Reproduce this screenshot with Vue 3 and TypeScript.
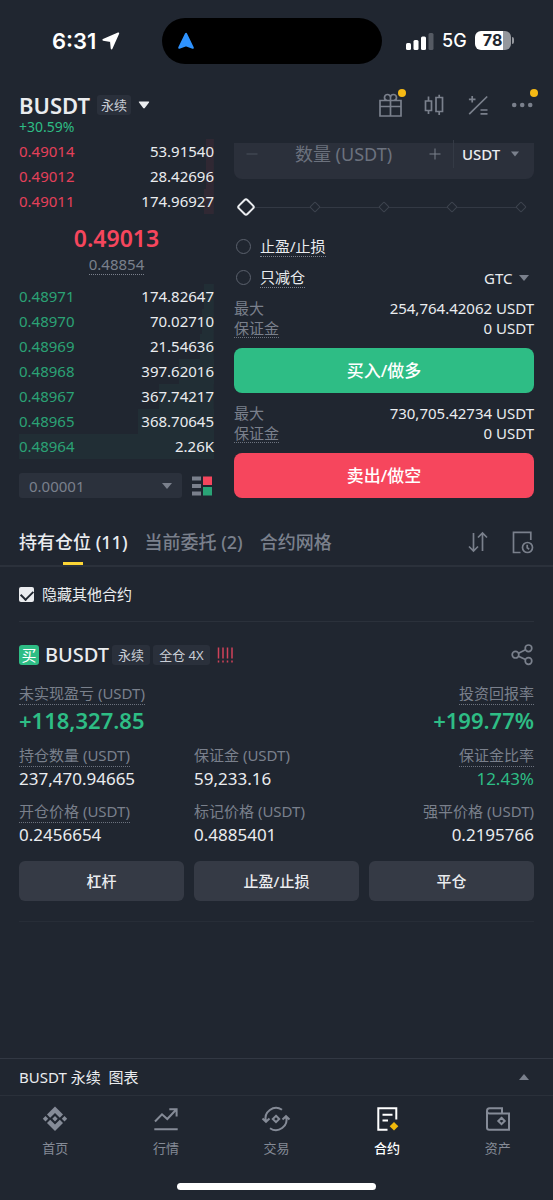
<script setup lang="ts">
import { ref } from 'vue'

interface BookRow {
  price: string
  amount: string
  depth: number
}

const asks: BookRow[] = [
  { price: '0.49014', amount: '53.91540', depth: 4 },
  { price: '0.49012', amount: '28.42696', depth: 4 },
  { price: '0.49011', amount: '174.96927', depth: 5 },
]

const bids: BookRow[] = [
  { price: '0.48971', amount: '174.82647', depth: 5 },
  { price: '0.48970', amount: '70.02710', depth: 6 },
  { price: '0.48969', amount: '21.54636', depth: 7 },
  { price: '0.48968', amount: '397.62016', depth: 18 },
  { price: '0.48967', amount: '367.74217', depth: 28 },
  { price: '0.48965', amount: '368.70645', depth: 39 },
  { price: '0.48964', amount: '2.26K', depth: 100 },
]

const tabs = ['持有仓位 (11)', '当前委托 (2)', '合约网格']
const activeTab = ref(0)

const stats = [
  { label: '未实现盈亏 (USDT)', value: '+118,327.85', hint: true, kind: 'big' },
  { label: '投资回报率', value: '+199.77%', hint: true, kind: 'big end' },
  { label: '持仓数量 (USDT)', value: '237,470.94665', hint: true, kind: '' },
  { label: '保证金 (USDT)', value: '59,233.16', hint: false, kind: '' },
  { label: '保证金比率', value: '12.43%', hint: true, kind: 'end up' },
  { label: '开仓价格 (USDT)', value: '0.2456654', hint: true, kind: '' },
  { label: '标记价格 (USDT)', value: '0.4885401', hint: false, kind: '' },
  { label: '强平价格 (USDT)', value: '0.2195766', hint: false, kind: 'end' },
]

const actions = ['杠杆', '止盈/止损', '平仓']

const quantity = ref('')
const percent = ref(0)
const takeProfit = ref(false)
const reduceOnly = ref(false)
const hideOthers = ref(true)
</script>

<template>
  <div class="page">
    <div class="status">
      <div class="clock">
        <span>6:31</span>
        <svg width="18" height="18" viewBox="0 0 18 18" aria-hidden="true">
          <path d="M16.300 1.300 1.300 7.800 8.900 9.200 9.600 16.500Z" fill="#fff" stroke="#fff" stroke-width="1.800" stroke-linejoin="round" />
        </svg>
      </div>
      <div class="island">
        <svg width="18" height="18" viewBox="0 0 18 18" aria-hidden="true">
          <path d="M9 1.800 2.200 15.800 9 13.300 15.800 15.800Z" fill="#2f93ff" stroke="#2f93ff" stroke-width="2" stroke-linejoin="round" />
        </svg>
      </div>
      <div class="radio">
        <svg width="28" height="18" viewBox="0 0 28 18" aria-hidden="true">
          <rect x="0" y="11" width="5" height="7" rx="1.500" fill="#fff" />
          <rect x="7.500" y="8" width="5" height="10" rx="1.500" fill="#fff" />
          <rect x="15" y="4.500" width="5" height="13.500" rx="1.500" fill="#fff" />
          <rect x="22.500" y="1" width="5" height="17" rx="1.500" fill="#555a63" />
        </svg>
        <span class="network">5G</span>
        <span class="battery"><b>78</b></span>
        <span class="nub"></span>
      </div>
    </div>

    <header class="top">
      <div class="symbol-row">
        <h1>BUSDT</h1>
        <span class="tag">永续</span>
        <svg class="caret-big" width="12" height="8" viewBox="0 0 12 8" aria-hidden="true">
          <path d="M1.500.5H10.500Q11.800.6 11 1.600L6.800 7Q6 7.800 5.200 7L1 1.600Q.2.6 1.500.5Z" fill="#eaecef" />
        </svg>
        <div class="tools">
          <button class="icon dot" aria-label="礼物">
            <svg viewBox="0 0 24 24" width="24" height="24">
              <path d="M2 7.500H23V23H2ZM2 13.500H23M12.500 7.500V23M12.500 7.500H9.500A3 3 0 1 1 12.500 4.500ZM12.500 7.500H15.500A3 3 0 1 0 12.500 4.500Z" />
            </svg>
          </button>
          <button class="icon" aria-label="K线">
            <svg viewBox="0 0 24 24" width="24" height="24">
              <path d="M3.500 8H9.500V17.500H3.500ZM6.500 3.500V8M6.500 17.500V21M14 4.500H20.500V18.500H14ZM17.200 1.800V4.500M17.200 18.500V22" />
            </svg>
          </button>
          <button class="icon" aria-label="计算器">
            <svg viewBox="0 0 24 24" width="24" height="24">
              <path d="M6.200 3V9.600M2.900 6.300H9.500M3.200 21.200 21.200 3.500M14.500 17H21.500M14.500 20.800H21.500" />
            </svg>
          </button>
          <button class="icon dot" aria-label="更多">
            <svg viewBox="0 0 24 24" width="24" height="24">
              <g fill="#7a808c" stroke="none">
                <circle cx="4.200" cy="12" r="2.300" />
                <circle cx="12.200" cy="12" r="2.300" />
                <circle cx="20.200" cy="12" r="2.300" />
              </g>
            </svg>
          </button>
        </div>
      </div>
      <p class="change">+30.59%</p>
    </header>

    <main>
      <section class="trade">
        <div class="book">
          <div v-for="row in asks" :key="row.price" class="row ask" :style="{ backgroundSize: row.depth + '% 100%' }">
            <span class="price">{{ row.price }}</span>
            <span>{{ row.amount }}</span>
          </div>
          <div class="last">0.49013</div>
          <div class="mark"><span>0.48854</span></div>
          <div v-for="row in bids" :key="row.price" class="row bid" :style="{ backgroundSize: row.depth + '% 100%' }">
            <span class="price">{{ row.price }}</span>
            <span>{{ row.amount }}</span>
          </div>
          <div class="precision">
            <label class="pick step">
              <select aria-label="价格精度"><option>0.00001</option></select>
              <svg class="caret" width="10" height="6" viewBox="0 0 10 6" aria-hidden="true"><path d="M0 0H10L5 6Z" /></svg>
            </label>
            <button class="layout" aria-label="盘口显示">
              <svg width="20" height="20" viewBox="0 0 20 20">
                <path d="M0 .5H9V4.500H0ZM0 8H9V12H0ZM0 15.500H9V19.500H0Z" fill="#7a808c" />
                <path d="M11 .5H20V9H11Z" fill="#f6465d" />
                <path d="M11 11H20V19.500H11Z" fill="#2aa476" />
              </svg>
            </button>
          </div>
        </div>

        <form class="order" @submit.prevent>
          <div class="quantity">
            <button type="button" class="stepper faint" aria-label="减少">
              <svg width="12" height="12" viewBox="0 0 12 12"><path d="M.5 6H11.500" /></svg>
            </button>
            <input v-model="quantity" type="text" placeholder="数量 (USDT)" aria-label="数量 (USDT)" />
            <button type="button" class="stepper" aria-label="增加">
              <svg width="12" height="12" viewBox="0 0 12 12"><path d="M.5 6H11.500M6 .5V11.500" /></svg>
            </button>
            <label class="pick unit">
              <select aria-label="单位"><option>USDT</option></select>
              <svg class="caret" width="8" height="6" viewBox="0 0 10 6" aria-hidden="true"><path d="M0 0H10L5 6Z" /></svg>
            </label>
          </div>

          <div class="slider">
            <div class="marks"><i v-for="n in 5" :key="n"></i></div>
            <input v-model="percent" type="range" min="0" max="100" aria-label="仓位比例" />
          </div>

          <div class="option">
            <input id="tpsl" v-model="takeProfit" type="checkbox" class="round" />
            <label for="tpsl">止盈/止损</label>
          </div>
          <div class="option">
            <input id="reduce" v-model="reduceOnly" type="checkbox" class="round" />
            <label for="reduce">只减仓</label>
            <label class="pick tif">
              <select aria-label="有效方式"><option>GTC</option></select>
              <svg class="caret" width="10" height="6" viewBox="0 0 10 6" aria-hidden="true"><path d="M0 0H10L5 6Z" /></svg>
            </label>
          </div>

          <div class="limits">
            <div><span>最大</span><b>254,764.42062 USDT</b></div>
            <div><span class="hint">保证金</span><b>0 USDT</b></div>
          </div>
          <button class="submit buy">买入/做多</button>
          <div class="limits">
            <div><span>最大</span><b>730,705.42734 USDT</b></div>
            <div><span class="hint">保证金</span><b>0 USDT</b></div>
          </div>
          <button class="submit sell">卖出/做空</button>
        </form>
      </section>

      <nav class="tabs">
        <button v-for="(tab, i) in tabs" :key="tab" :class="{ active: i === activeTab }" @click="activeTab = i">{{ tab }}</button>
        <div class="tools">
          <button class="icon" aria-label="排序">
            <svg viewBox="0 0 24 24" width="24" height="24">
              <path d="M7.500 3V21M3 16.500 7.500 21 12 16.500M16.500 21V3M12 7.500 16.500 3 21 7.500" />
            </svg>
          </button>
          <button class="icon" aria-label="历史记录">
            <svg viewBox="0 0 24 24" width="24" height="24">
              <path d="M20.800 10V2.300H3.500V22.500H10.500" />
              <circle cx="17.500" cy="17.500" r="5" />
              <path d="M17.200 14.800V17.800L19.200 19.200" />
            </svg>
          </button>
        </div>
      </nav>

      <div class="filter">
        <input id="hide" v-model="hideOthers" type="checkbox" />
        <label for="hide">隐藏其他合约</label>
      </div>

      <article class="position">
        <div class="heading">
          <span class="side">买</span>
          <h2>BUSDT</h2>
          <span class="tag">永续</span>
          <span class="tag">全仓 4X</span>
          <svg class="risk" width="17" height="16" viewBox="0 0 17 16" aria-hidden="true">
            <path d="M1.500.5V11.500M6 .5V11.500M10.500.5V11.500M15 .5V11.500M1.500 13.500V15.500M6 13.500V15.500M10.500 13.500V15.500M15 13.500V15.500" />
          </svg>
          <button class="icon share" aria-label="分享">
            <svg viewBox="0 0 24 24" width="24" height="24">
              <circle cx="18.500" cy="5.300" r="3.300" />
              <circle cx="5.500" cy="11.700" r="3.300" />
              <circle cx="18.500" cy="18" r="3.300" />
              <path d="M8.500 10.300 15.500 6.800M8.500 13.200 15.500 16.600" />
            </svg>
          </button>
        </div>

        <dl class="stats">
          <div v-for="s in stats" :key="s.label" :class="s.kind">
            <dt><span :class="{ hint: s.hint }">{{ s.label }}</span></dt>
            <dd>{{ s.value }}</dd>
          </div>
        </dl>

        <div class="actions">
          <button v-for="a in actions" :key="a">{{ a }}</button>
        </div>
      </article>
    </main>

    <footer>
      <button class="chart">
        <span>BUSDT 永续&nbsp; 图表</span>
        <svg width="10" height="6" viewBox="0 0 10 6" aria-hidden="true"><path d="M0 6H10L5 0Z" fill="#7a808c" /></svg>
      </button>
      <nav class="bottom">
        <a href="#home">
          <svg viewBox="0 0 24 24" width="24" height="24">
            <g fill="#858b97" stroke="none">
              <path d="M12 -.5 20 7.500 16.800 10.700 12 5.900 7.200 10.700 4 7.500ZM12 24 20 16 16.800 12.800 12 17.600 7.200 12.800 4 16ZM12 9.100 14.700 11.800 12 14.500 9.300 11.800ZM2.500 9.100 5.200 11.800 2.500 14.500-.2 11.800ZM21.500 9.100 24.200 11.800 21.500 14.500 18.800 11.800Z" />
            </g>
          </svg>
          <span>首页</span>
        </a>
        <a href="#markets">
          <svg viewBox="0 0 24 24" width="24" height="24">
            <path d="M1 14.500 8 7.300 13.300 12 22 2.800M15.300 2.200H22.600V9.500M.3 22.300H23.700" />
          </svg>
          <span>行情</span>
        </a>
        <a href="#trade">
          <svg viewBox="0 0 28 24" width="28" height="24">
            <path d="M4 14.500A10.500 10.500 0 0 1 20 2.800M.5 11.500 4 14.800 7.500 11.500M24 9.500A10.500 10.500 0 0 1 8 21.200M20.500 12.500 24 9.200 27.500 12.500M14 8.800 17.200 12 14 15.200 10.800 12Z" />
          </svg>
          <span>交易</span>
        </a>
        <a href="#futures" class="current">
          <svg viewBox="0 0 24 24" width="24" height="24">
            <path d="M21.300 12.500V1.300H3.300V22.700H12.500M7.500 7.700H17.500M7.500 13.500H13" />
            <path d="M19 15 23.300 19.300 19 23.600 14.700 19.300Z" fill="#f0b90b" stroke="none" />
          </svg>
          <span>合约</span>
        </a>
        <a href="#wallet">
          <svg viewBox="0 0 24 24" width="24" height="24">
            <path d="M16 6.500V1.300H3.500Q1 1.300 1 4V20.500Q1 22.700 3.200 22.700H23V6.500H3.500Q1.200 6.500 1 4M15.500 10.800 18.700 14 15.500 17.200 12.300 14Z" />
          </svg>
          <span>资产</span>
        </a>
      </nav>
      <div class="home-bar"></div>
    </footer>
  </div>
</template>

<style>
body {
  margin: 0;
  background: #202630;
}
</style>

<style scoped>
.page {
  display: flex;
  flex-direction: column;
  min-height: 100vh;
  background: #202630;
  color: #eaecef;
  font: 15px/20px "Noto Sans", "Noto Sans CJK SC", sans-serif;
}
.page * {
  box-sizing: border-box;
}
h1, h2, p, dl, dd {
  margin: 0;
}
button, select, input {
  margin: 0;
  padding: 0;
  border: 0;
  background: none;
  color: inherit;
  font: inherit;
}
button {
  cursor: pointer;
}
select {
  appearance: none;
  outline: none;
}
svg {
  display: block;
  flex: none;
  overflow: visible;
}

.status {
  display: grid;
  grid-template-columns: 162fr 220fr 171fr;
  align-items: center;
  height: 81px;
  font-family: Inter, sans-serif;
  color: #fff;
}
.clock {
  display: flex;
  align-items: center;
  gap: 6px;
  padding-left: 52px;
  font-size: 22px;
  font-weight: 600;
}
.island {
  display: flex;
  align-items: center;
  height: 46px;
  padding-left: 15px;
  border-radius: 23px;
  background: #000;
}
.radio {
  display: flex;
  align-items: center;
  padding-left: 24px;
}
.network {
  margin: 0 8px;
  font-size: 18px;
  font-weight: 500;
}
.battery {
  width: 36px;
  height: 19px;
  border-radius: 6px;
  background: linear-gradient(90deg, #fff 78%, #94979d 78%);
  color: #202630;
  text-align: center;
  font-size: 16px;
  line-height: 19px;
}
.nub {
  width: 2px;
  height: 7px;
  margin-left: 1px;
  border-radius: 0 2px 2px 0;
  background: #94979d;
}

.top {
  padding: 12px 19px 0;
}
.symbol-row {
  display: flex;
  align-items: center;
  height: 24px;
}
h1 {
  font-size: 22px;
  font-weight: 600;
  line-height: 22px;
}
.tag {
  height: 20px;
  padding: 0 6px;
  border-radius: 3px;
  background: #2a303b;
  color: #c9ced6;
  font-size: 13px;
  line-height: 20px;
}
h1 + .tag {
  margin-left: 7px;
  padding: 0 4px;
}
.caret-big {
  margin-left: 7px;
}
.tools {
  display: flex;
  gap: 20px;
  margin-left: auto;
}
.icon {
  position: relative;
  width: 24px;
  height: 24px;
}
.icon svg {
  fill: none;
  stroke: #7a808c;
  stroke-width: 1.7;
}
.dot::after {
  content: "";
  position: absolute;
  top: -4px;
  right: -4px;
  width: 8px;
  height: 8px;
  border-radius: 50%;
  background: #f5b914;
}
.change {
  color: #2ebd85;
  font-size: 14px;
}

.trade {
  display: grid;
  grid-template-columns: minmax(0, 39fr) minmax(0, 60fr);
  gap: 20px;
  padding: 2px 19px 0;
}
.row {
  display: flex;
  justify-content: space-between;
  line-height: 25px;
  background-position: right top;
  background-repeat: no-repeat;
}
.ask {
  background-image: linear-gradient(#302833, #302833);
}
.bid {
  background-image: linear-gradient(#212e35, #212e35);
}
.ask .price {
  color: #e4405a;
}
.bid .price {
  color: #2ba275;
}
.last {
  margin-top: 10px;
  color: #f6465d;
  font-size: 23px;
  font-weight: 600;
  line-height: 28px;
  text-align: center;
}
.mark {
  display: flex;
  justify-content: center;
  margin: 2px 0 9px;
  color: #7a808c;
}
.mark span {
  border-bottom: 1px dotted #7a808c;
}
.pick {
  display: flex;
  align-items: center;
}
.caret {
  fill: #7a808c;
}
.precision {
  display: flex;
  align-items: center;
  gap: 10px;
  margin-top: 14px;
}
.step {
  flex: 1;
  height: 25px;
  padding: 0 10px;
  border-radius: 3px;
  background: #2b313c;
  color: #7a808c;
}
.step select {
  flex: 1;
}
.layout {
  padding-right: 2px;
}

.order {
  padding-top: 4px;
}
.quantity {
  display: flex;
  align-items: center;
  height: 36px;
  padding: 0 15px 14px 12px;
  border-radius: 0 0 8px 8px;
  background: #2b303b;
}
.quantity input {
  flex: 1;
  min-width: 0;
  height: 22px;
  font-size: 18px;
  text-align: center;
  outline: none;
}
.quantity input::placeholder {
  color: #6c727e;
  opacity: 1;
}
.stepper svg {
  fill: none;
  stroke: #7a808c;
  stroke-width: 1;
}
.faint {
  opacity: .4;
}
.unit {
  gap: 10px;
  height: 28px;
  margin-left: 12px;
  padding-left: 8px;
  border-left: 1px solid #343a45;
  font-weight: 500;
}
.slider {
  position: relative;
  display: grid;
  align-items: center;
  height: 20px;
  margin: 18px 6px 0 5px;
}
.marks {
  display: flex;
  align-items: center;
  justify-content: space-between;
  margin: 0 3px;
  background: linear-gradient(#333944, #333944) center / 100% 1px no-repeat;
}
.marks i {
  width: 8px;
  height: 8px;
  border: 1px solid #3d434e;
  border-radius: 1px;
  background: #202630;
  transform: rotate(45deg);
}
.slider input {
  position: absolute;
  inset: 0;
  width: 100%;
  appearance: none;
  outline: none;
}
.slider input::-webkit-slider-thumb {
  appearance: none;
  width: 14px;
  height: 14px;
  border: 2px solid #eaecef;
  border-radius: 3px;
  background: #202630;
  transform: rotate(45deg);
}
.option {
  display: flex;
  align-items: center;
  height: 21px;
  margin-top: 10px;
}
.slider + .option {
  margin-top: 19px;
}
.round {
  appearance: none;
  width: 15px;
  height: 15px;
  margin: 0 9px 0 2px;
  border: 1px solid #5b616d;
  border-radius: 50%;
}
.round:checked {
  background: #eaecef;
}
.round + label {
  border-bottom: 1px dotted #7a808c;
}
.tif {
  gap: 6px;
  margin-left: auto;
  padding-right: 5px;
}
.limits {
  margin: 10px 0;
}
.limits div {
  display: flex;
  justify-content: space-between;
  height: 20px;
  color: #7a808c;
}
.limits b {
  color: #eaecef;
  font-weight: 400;
}
.hint {
  border-bottom: 1px dotted #6c727e;
}
.submit {
  width: 100%;
  height: 45px;
  border-radius: 8px;
  color: #fff;
  font-size: 17px;
  font-weight: 500;
}
.buy {
  background: #2ebd85;
}
.sell {
  background: #f6465d;
}

.tabs {
  display: flex;
  gap: 17px;
  height: 69px;
  padding: 32px 19px 0;
  border-bottom: 2px solid #2b313b;
}
.tabs > button {
  position: relative;
  height: 35px;
  padding-bottom: 11px;
  color: #7a808c;
  font-size: 18px;
  font-weight: 500;
  line-height: 24px;
  white-space: nowrap;
}
.tabs > .active {
  color: #eaecef;
}
.active::after {
  content: "";
  position: absolute;
  bottom: 0;
  left: 50%;
  width: 20px;
  height: 3px;
  margin-left: -10px;
  background: #fcd535;
}
.filter {
  display: flex;
  align-items: center;
  gap: 8px;
  height: 55px;
  margin: 0 19px;
  border-bottom: 1px solid #2b313b;
}
.filter input {
  display: grid;
  appearance: none;
  width: 15px;
  height: 15px;
  border-radius: 2px;
  background: #eaecef;
}
.filter input:checked::before {
  content: "";
  justify-self: center;
  width: 10px;
  height: 6px;
  margin-top: 3px;
  border: solid #202630;
  border-width: 0 0 2px 2px;
  transform: rotate(-45deg);
}

.position {
  margin: 21px 19px 0;
  padding-bottom: 20px;
  border-bottom: 1px solid #272d37;
}
.heading {
  display: flex;
  align-items: center;
  height: 24px;
}
.side {
  width: 20px;
  height: 20px;
  margin-right: 6px;
  border-radius: 3px;
  background: #2ebd85;
  color: #fff;
  text-align: center;
}
h2 {
  font-size: 20px;
  font-weight: 500;
  line-height: 24px;
}
h2 ~ .tag {
  margin-left: 3px;
}
.risk {
  margin-left: 7px;
  stroke: #cf4259;
  stroke-width: 1.5;
}
.share {
  margin-left: auto;
}
.stats {
  display: grid;
  grid-template-columns: repeat(6, 1fr);
  gap: 11px 10px;
  margin-top: 16px;
}
.stats > div {
  grid-column: span 2;
}
.stats > .big {
  grid-column: span 3;
}
.stats .end {
  text-align: right;
}
dt {
  display: flex;
  height: 22px;
  color: #7a808c;
  white-space: nowrap;
}
.end dt {
  justify-content: flex-end;
}
dt span {
  padding-bottom: 1px;
}
dd {
  margin-top: 1px;
  font-size: 17px;
  line-height: 22px;
}
.big dd {
  color: #2ebd85;
  font-size: 22px;
  font-weight: 600;
  line-height: 28px;
}
.up dd {
  color: #2ebd85;
}
.actions {
  display: grid;
  grid-template-columns: repeat(3, 1fr);
  gap: 10px;
  margin-top: 15px;
}
.actions button {
  height: 40px;
  border-radius: 6px;
  background: #353a45;
  font-weight: 500;
}

footer {
  margin-top: auto;
}
.chart {
  display: flex;
  align-items: center;
  justify-content: space-between;
  width: 100%;
  height: 37px;
  padding: 0 24px 0 19px;
  border-top: 1px solid #323843;
}
.bottom {
  display: grid;
  grid-template-columns: repeat(5, 1fr);
  padding-top: 11px;
  border-top: 1px solid #2a303a;
}
.bottom a {
  display: grid;
  gap: 7px;
  justify-items: center;
  color: #858b97;
  font-size: 13px;
  text-decoration: none;
}
.bottom svg {
  fill: none;
  stroke: currentColor;
  stroke-width: 2;
}
.bottom .current {
  color: #fff;
  font-weight: 500;
}
.home-bar {
  width: 36%;
  height: 7px;
  margin: 25px auto 10px;
  border-radius: 4px;
  background: #fff;
}
</style>
